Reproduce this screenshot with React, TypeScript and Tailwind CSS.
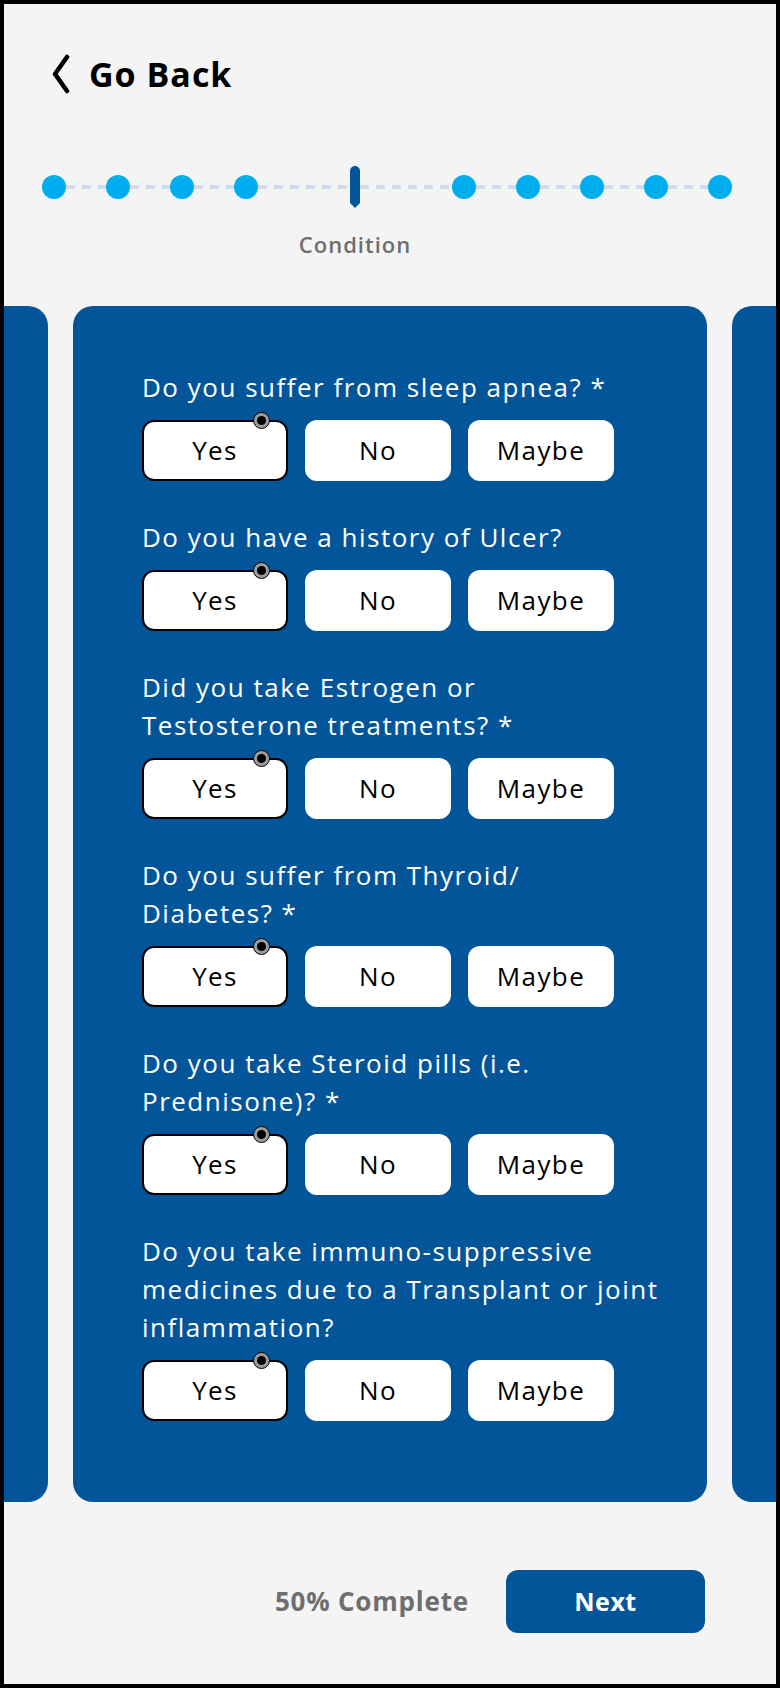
import { useState } from 'react';

const questions = [
  'Do you suffer from sleep apnea? *',
  'Do you have a history of Ulcer?',
  'Did you take Estrogen or\nTestosterone treatments? *',
  'Do you suffer from Thyroid/\nDiabetes? *',
  'Do you take Steroid pills (i.e.\nPrednisone)? *',
  'Do you take immuno-suppressive\nmedicines due to a Transplant or joint\ninflammation?',
];

const options = ['Yes', 'No', 'Maybe'];

const Dash = ({ wide }: { wide?: boolean }) => (
  <div
    className={`h-[4px] ${wide ? 'w-[92px]' : 'w-[40px]'} bg-[repeating-linear-gradient(90deg,#cddcea_0_9px,transparent_9px_16px)]`}
  />
);

const Dot = () => <div className="h-[24px] w-[24px] shrink-0 rounded-full bg-[#00adef]" />;

const Question = ({ text }: { text: string }) => {
  const [picked, setPicked] = useState('Yes');
  return (
    <div>
      <p className="mb-[14px] whitespace-pre-line text-[26px] leading-[38px] tracking-[1.5px] text-white">{text}</p>
      <div className="flex gap-[17px]">
        {options.map((opt) => (
          <button
            key={opt}
            onClick={() => setPicked(opt)}
            className={`relative flex h-[61px] w-[146px] items-center justify-center rounded-xl border-2 bg-white text-[26px] tracking-[1.4px] text-black ${
              picked === opt ? 'border-black' : 'border-white'
            }`}
          >
            {opt}
            {picked === opt && (
              <span className="absolute -top-[10px] right-[16px] flex h-[17px] w-[17px] items-center justify-center rounded-full border-[1.5px] border-black bg-[#9b9b9b]">
                <span className="h-[9px] w-[9px] rounded-full bg-black" />
              </span>
            )}
          </button>
        ))}
      </div>
    </div>
  );
};

const App = () => {
  return (
    <div className="min-h-[1688px] overflow-hidden border-4 border-black bg-[#f4f4f4] font-['Open_Sans',sans-serif]">
      {/* Header */}
      <div className="box-content flex h-[40px] items-center gap-[18px] pl-[47px] pt-[50px]">
        <svg width="20" height="40" viewBox="0 0 20 40" fill="none">
          <path d="M16 3 L4 20 L16 37" stroke="black" strokeWidth="4.5" strokeLinecap="round" strokeLinejoin="round" />
        </svg>
        <span className="text-[34px] font-bold leading-none tracking-[1px] text-black">Go Back</span>
      </div>

      {/* Progress */}
      <div className="mt-[72px] flex h-[41px] items-center pl-[38px]">
        <Dot />
        <Dash />
        <Dot />
        <Dash />
        <Dot />
        <Dash />
        <Dot />
        <Dash wide />
        <div className="relative h-[41px] w-[10px] shrink-0">
          <div className="h-[37px] w-[10px] rounded-t-full bg-[#03559a]" />
          <div className="mx-auto h-0 w-0 border-x-[5px] border-t-[5px] border-x-transparent border-t-[#03559a]" />
          <span className="absolute left-1/2 top-[67px] -translate-x-1/2 text-[22px] font-semibold leading-none tracking-[1px] text-[#6e6e6e]">
            Condition
          </span>
        </div>
        <Dash wide />
        <Dot />
        <Dash />
        <Dot />
        <Dash />
        <Dot />
        <Dash />
        <Dot />
        <Dash />
        <Dot />
      </div>

      {/* Cards */}
      <div className="mt-[99px] flex justify-center gap-[25px]">
        <div className="w-[634px] shrink-0 rounded-[20px] bg-[#03559a]" />
        <div className="flex w-[634px] shrink-0 flex-col gap-[37px] rounded-[20px] bg-[#03559a] pb-[81px] pl-[69px] pt-[62px]">
          {questions.map((q) => (
            <Question key={q} text={q} />
          ))}
        </div>
        <div className="w-[634px] shrink-0 rounded-[20px] bg-[#03559a]" />
      </div>

      {/* Footer */}
      <div className="mt-[68px] flex items-center justify-end gap-[37px] pr-[71px]">
        <span className="text-[26px] font-bold tracking-[0.8px] text-[#6e6e6e]">50% Complete</span>
        <button className="h-[63px] w-[199px] rounded-xl bg-[#03559a] text-[25px] font-bold tracking-[0.5px] text-white">
          Next
        </button>
      </div>
    </div>
  );
};

export default App;
